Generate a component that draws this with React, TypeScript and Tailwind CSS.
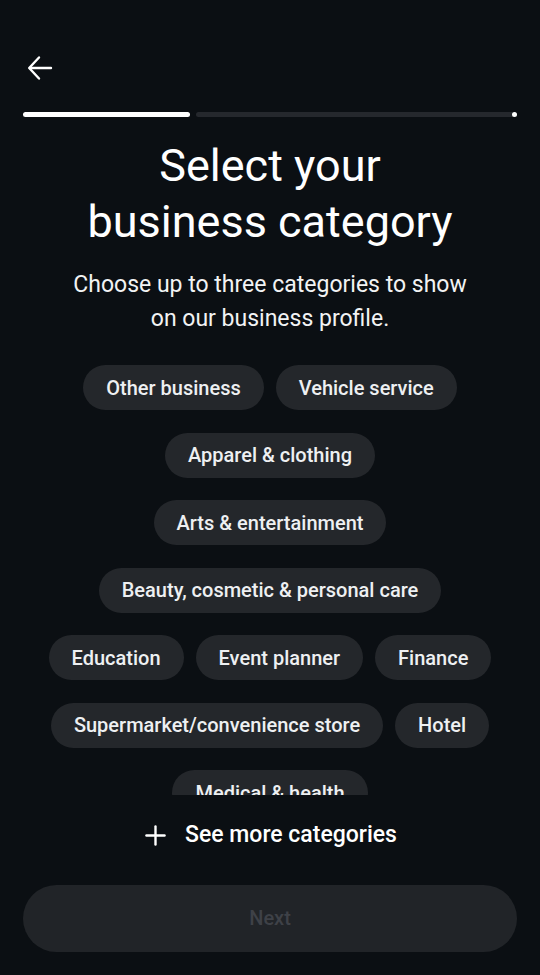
import React from "react";

const rows: string[][] = [
  ["Other business", "Vehicle service"],
  ["Apparel & clothing"],
  ["Arts & entertainment"],
  ["Beauty, cosmetic & personal care"],
  ["Education", "Event planner", "Finance"],
  ["Supermarket/convenience store", "Hotel"],
  ["Medical & health"],
];

export default function App() {
  return (
    <div
      className="w-[540px] h-[975px] bg-[#0b0f13] text-white flex flex-col overflow-hidden"
      style={{ fontFamily: "Roboto, 'Noto Sans', sans-serif" }}
    >
      <div className="h-[96px] flex items-center pl-[26px] pt-[40px]">
        <svg width="28" height="28" viewBox="0 0 28 28" fill="none" stroke="white" strokeWidth="2.4" strokeLinecap="round" strokeLinejoin="round">
          <path d="M25 14H4" />
          <path d="M13 3.5L3.2 14L13 24.5" />
        </svg>
      </div>
      <div className="flex items-center px-[23px] h-[6px] mt-[15px]">
        <div className="h-[5px] w-[167px] rounded-full bg-white" />
        <div className="h-[5px] flex-1 ml-[6px] rounded-full bg-[#25282d]" />
        <div className="h-[5px] w-[5px] rounded-full bg-white -ml-[3px]" />
      </div>
      <h1 className="mt-[21px] text-center text-[45px] leading-[56px] font-normal">
        Select your
        <br />
        business category
      </h1>
      <p className="mt-[18px] text-center text-[23px] leading-[34px] text-[#f2f3f4]">
        Choose up to three categories to show
        <br />
        on our business profile.
      </p>
      <div className="mt-[29px] h-[430px] overflow-hidden">
        <div className="flex flex-col items-center gap-[22.5px]">
          {rows.map((row, i) => (
            <div key={i} className="flex justify-center gap-[12px]">
              {row.map((c) => (
                <div
                  key={c}
                  className="h-[45px] px-[23px] rounded-full bg-[#24272b] flex items-center text-[20px] font-medium text-[#eef0f2] whitespace-nowrap"
                >
                  {c}
                </div>
              ))}
            </div>
          ))}
        </div>
      </div>
      <div className="mt-[23px] flex items-center justify-center gap-[19px] pl-[2px]">
        <svg width="21" height="21" viewBox="0 0 22 22" fill="none" stroke="white" strokeWidth="2.5" strokeLinecap="round">
          <path d="M11 1.5V20.5" />
          <path d="M1.5 11H20.5" />
        </svg>
        <span className="text-[23px] font-medium">See more categories</span>
      </div>
      <div className="mt-[32px] px-[23px]">
        <button className="w-full h-[67px] rounded-full bg-[#212428] text-[20px] font-medium text-[#3e4147]">
          Next
        </button>
      </div>
    </div>
  );
}
